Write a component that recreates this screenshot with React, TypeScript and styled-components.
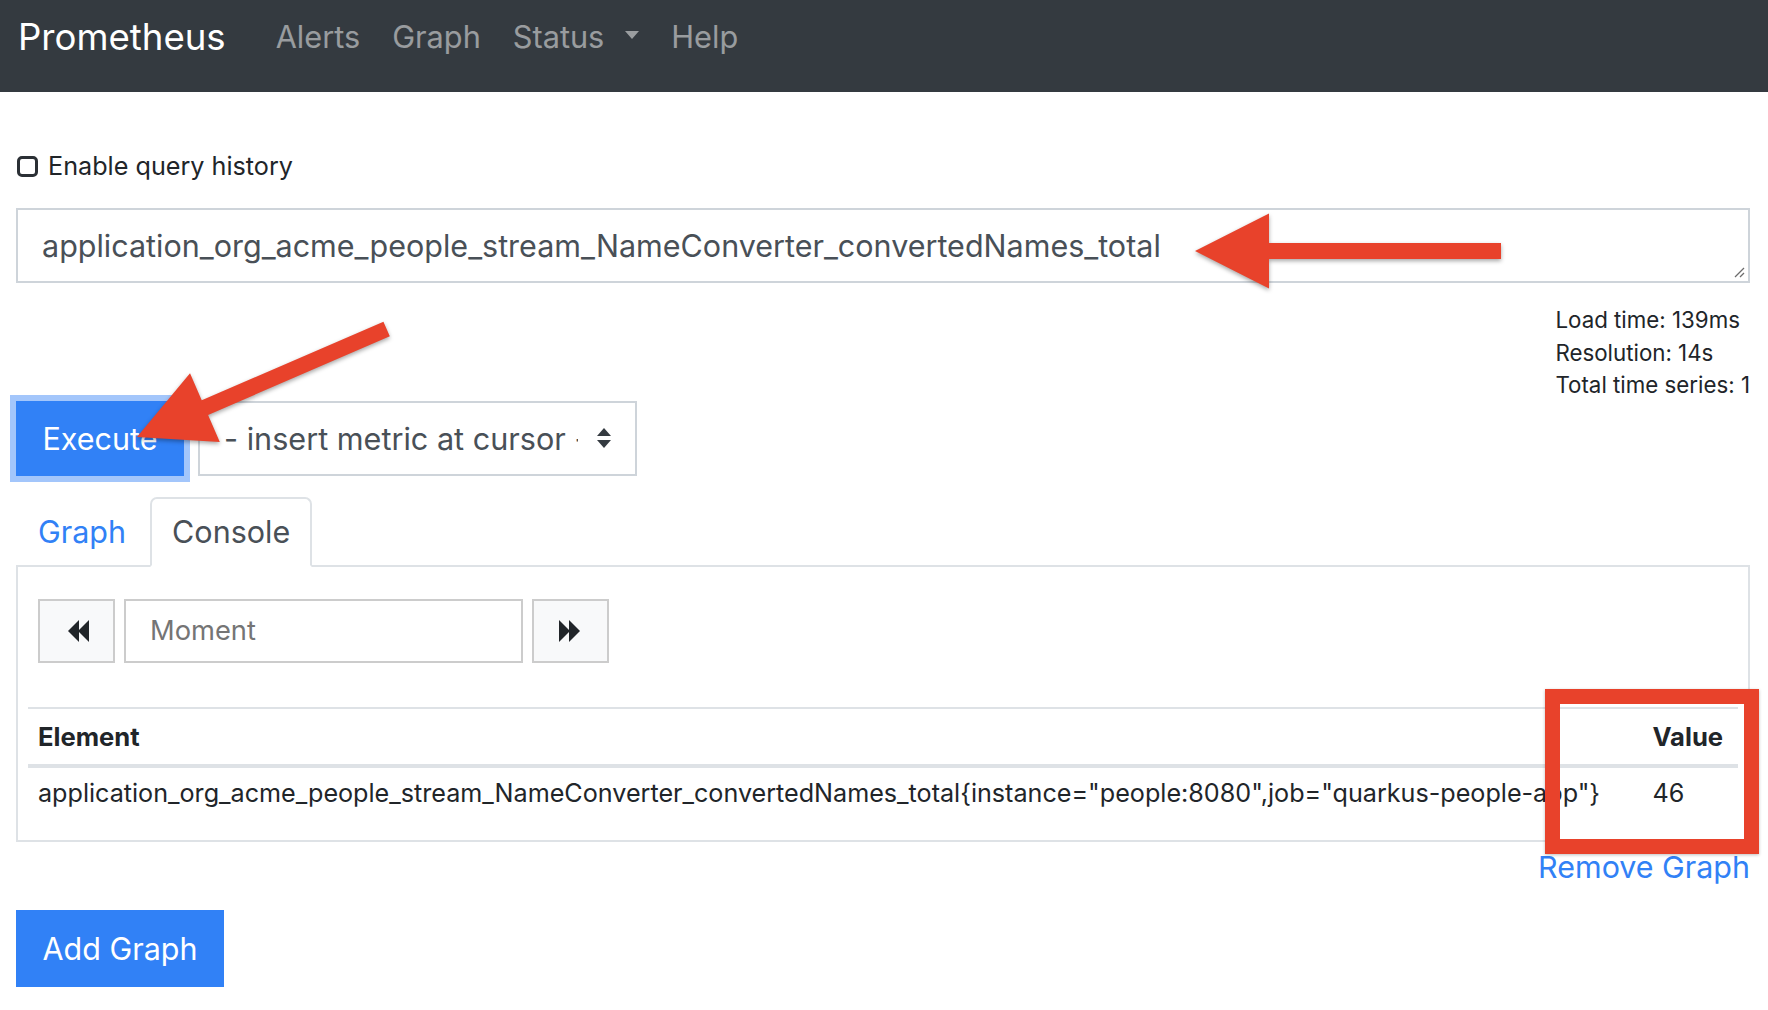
import React from 'react';
import styled, { createGlobalStyle } from 'styled-components';

const GlobalStyle = createGlobalStyle`
  html, body { margin: 0; padding: 0; background: #ffffff; }
  body { font-family: Inter, "Liberation Sans", Arial, sans-serif; color: #212529; }
  * { box-sizing: border-box; }
`;

const BLUE = '#3181f6';
const RED = '#e8422b';

const Page = styled.div`
  position: relative;
  width: 1768px;
  height: 1010px;
  overflow: hidden;
  background: #fff;
`;

const Navbar = styled.nav`
  height: 92px;
  background: #343a40;
  display: flex;
  align-items: center;
  padding: 0 0 18px 18px;
`;

const Brand = styled.span`
  font-size: 36.6px;
  color: #fff;
  margin-right: 34px;
  line-height: 1;
`;

const NavList = styled.ul`
  display: flex;
  list-style: none;
  margin: 0;
  padding: 0;
`;

const NavItem = styled.li`
  padding: 0 16px;
  font-size: 30.7px;
  line-height: 1;
  color: rgba(255, 255, 255, 0.5);
  display: flex;
  align-items: center;
  gap: 21px;
`;

const Caret = styled.span`
  width: 0;
  height: 0;
  border-left: 7px solid transparent;
  border-right: 7px solid transparent;
  border-top: 8px solid rgba(255, 255, 255, 0.5);
  margin-top: -4px;
`;

const Container = styled.main`
  display: flex;
  flex-direction: column;
  padding: 0 18px 0 16px;
`;

const CheckRow = styled.label`
  display: flex;
  align-items: center;
  gap: 10px;
  height: 36px;
  margin-top: 56px;
  margin-left: 1px;
  font-size: 25.2px;
  color: #212529;
`;

const CheckBox = styled.span`
  width: 21px;
  height: 21px;
  border: 3px solid #2b3035;
  border-radius: 5px;
  display: inline-block;
`;

const QueryBox = styled.div`
  position: relative;
  margin-top: 24px;
  height: 75px;
  border: 2px solid #ced4da;
  padding: 0 24px;
  display: flex;
  align-items: center;
  font-size: 30.5px;
  color: #495057;
`;

const Grip = styled.svg`
  position: absolute;
  right: 3px;
  bottom: 3px;
`;

const Stats = styled.div`
  align-self: flex-end;
  margin-top: 21px;
  font-size: 22.3px;
  line-height: 32.5px;
  color: #212529;
`;

const ExecRow = styled.div`
  display: flex;
  align-items: center;
  margin-top: -1px;
`;

const PrimaryButton = styled.button<{ $focused?: boolean; $w: number; $h: number }>`
  width: ${(p) => p.$w}px;
  height: ${(p) => p.$h}px;
  background: ${BLUE};
  color: #fff;
  border: 0;
  border-radius: 0;
  font-family: inherit;
  font-size: 30.5px;
  padding: 0;
  box-shadow: ${(p) => (p.$focused ? '0 0 0 6px #a3c6fb' : 'none')};
`;

const SelectBox = styled.div`
  position: relative;
  margin-left: 14px;
  width: 439px;
  height: 75px;
  border: 2px solid #ced4da;
  display: flex;
  align-items: center;
  padding-left: 24px;
  font-size: 30.6px;
  color: #495057;
`;

const SelectText = styled.span`
  width: 354px;
  overflow: hidden;
  white-space: nowrap;
`;

const UpDown = styled.svg`
  position: absolute;
  right: 23px;
  top: 50%;
  transform: translateY(-50%);
`;

const TabBar = styled.div`
  display: flex;
  gap: 2px;
  margin-top: 21px;
  border-bottom: 2px solid #dee2e6;
`;

const Tab = styled.div<{ $active?: boolean }>`
  height: 70px;
  padding: 0 20px;
  display: flex;
  align-items: center;
  font-size: 30.5px;
  margin-bottom: -2px;
  border: 2px solid ${(p) => (p.$active ? '#dee2e6' : 'transparent')};
  border-bottom-color: ${(p) => (p.$active ? '#fff' : 'transparent')};
  border-top-left-radius: 7px;
  border-top-right-radius: 7px;
  color: ${(p) => (p.$active ? '#495057' : BLUE)};
  background: ${(p) => (p.$active ? '#fff' : 'transparent')};
`;

const Panel = styled.section`
  border: 2px solid #dee2e6;
  border-top: 0;
  padding: 32px 10px 21px;
`;

const TimeControls = styled.div`
  display: flex;
  gap: 9px;
  margin-left: 10px;
  height: 64px;
`;

const StepButton = styled.div<{ $shift: number }>`
  width: 77px;
  height: 64px;
  background: #f8f9fa;
  border: 2px solid #cccccc;
  display: flex;
  align-items: center;
  justify-content: center;
  padding-left: ${(p) => (p.$shift > 0 ? p.$shift : 0)}px;
  padding-right: ${(p) => (p.$shift < 0 ? -p.$shift : 0)}px;
`;

const MomentInput = styled.div`
  width: 399px;
  height: 64px;
  border: 2px solid #cccccc;
  padding-left: 24px;
  display: flex;
  align-items: center;
  font-size: 27.3px;
  color: #757575;
`;

const Table = styled.table`
  width: 100%;
  margin-top: 44px;
  border-collapse: separate;
  border-spacing: 0;
  font-size: 25.15px;
  color: #212529;
`;

const Th = styled.th<{ $right?: boolean }>`
  text-align: left;
  font-weight: 700;
  font-size: 25.6px;
  line-height: 33px;
  padding: 11px ${(p) => (p.$right ? '13px' : '10px')} 11px 10px;
  border-top: 2px solid #dee2e6;
  border-bottom: 4px solid #dee2e6;
  white-space: nowrap;
`;

const Td = styled.td<{ $right?: boolean }>`
  line-height: 33px;
  padding: 9px ${(p) => (p.$right ? '13px' : '10px')} 9px 10px;
  white-space: nowrap;
`;

const RemoveRow = styled.div`
  display: flex;
  justify-content: flex-end;
  margin-top: 7px;
  font-size: 30.45px;
  line-height: 36px;
  color: ${BLUE};
`;

const AddRow = styled.div`
  margin-top: 25px;
`;

const Overlay = styled.svg`
  position: absolute;
  left: 0;
  top: 0;
  pointer-events: none;
  filter: drop-shadow(0 2px 2px rgba(0, 0, 0, 0.35));
`;

const RedBox = styled.div`
  position: absolute;
  left: 1545px;
  top: 689px;
  width: 214px;
  height: 165px;
  border: 15px solid ${RED};
  box-shadow: 0 1px 3px rgba(0, 0, 0, 0.25);
  pointer-events: none;
`;

const QUERY = 'application_org_acme_people_stream_NameConverter_convertedNames_total';
const ROW = QUERY + '{instance="people:8080",job="quarkus-people-app"}';

function Rewind({ flip }: { flip?: boolean }) {
  return (
    <svg width="22" height="22" viewBox="0 0 22 22" style={flip ? { transform: 'scaleX(-1)' } : undefined}>
      <polygon points="0,11 11,0 11,22" fill="#212529" />
      <polygon points="10,11 21,0 21,22" fill="#212529" />
    </svg>
  );
}

function Arrow({ x, y, angle, length }: { x: number; y: number; angle: number; length: number }) {
  const L = length;
  const pts = `0,0 74,-37.5 74,-8 ${L},-8 ${L},8 74,8 74,37.5`;
  return <polygon points={pts} fill={RED} transform={`translate(${x} ${y}) rotate(${angle})`} />;
}

export default function App() {
  return (
    <Page>
      <GlobalStyle />
      <Navbar>
        <Brand>Prometheus</Brand>
        <NavList>
          <NavItem>Alerts</NavItem>
          <NavItem>Graph</NavItem>
          <NavItem>
            Status
            <Caret />
          </NavItem>
          <NavItem>Help</NavItem>
        </NavList>
      </Navbar>

      <Container>
        <CheckRow>
          <CheckBox />
          Enable query history
        </CheckRow>

        <QueryBox>
          {QUERY}
          <Grip width="12" height="12" viewBox="0 0 12 12">
            <line x1="11" y1="2" x2="2" y2="11" stroke="#6c6c6c" strokeWidth="1.3" />
            <line x1="11" y1="7" x2="7" y2="11" stroke="#6c6c6c" strokeWidth="1.3" />
          </Grip>
        </QueryBox>

        <Stats>
          <div>Load time: 139ms</div>
          <div>Resolution: 14s</div>
          <div>Total time series: 1</div>
        </Stats>

        <ExecRow>
          <PrimaryButton $focused $w={168} $h={75}>
            Execute
          </PrimaryButton>
          <SelectBox>
            <SelectText>- insert metric at cursor -</SelectText>
            <UpDown width="16" height="26" viewBox="0 0 16 26">
              <polygon points="1,11 8,3 15,11" fill="#343a40" />
              <polygon points="1,15 15,15 8,23" fill="#343a40" />
            </UpDown>
          </SelectBox>
        </ExecRow>

        <TabBar>
          <Tab>Graph</Tab>
          <Tab $active>Console</Tab>
        </TabBar>

        <Panel>
          <TimeControls>
            <StepButton $shift={5}>
              <Rewind />
            </StepButton>
            <MomentInput>Moment</MomentInput>
            <StepButton $shift={-3}>
              <Rewind flip />
            </StepButton>
          </TimeControls>

          <Table>
            <thead>
              <tr>
                <Th>Element</Th>
                <Th $right>Value</Th>
              </tr>
            </thead>
            <tbody>
              <tr>
                <Td>{ROW}</Td>
                <Td $right>46</Td>
              </tr>
            </tbody>
          </Table>
        </Panel>

        <RemoveRow>Remove Graph</RemoveRow>

        <AddRow>
          <PrimaryButton $w={208} $h={77}>
            Add Graph
          </PrimaryButton>
        </AddRow>
      </Container>

      <RedBox />
      <Overlay width="1768" height="1010" viewBox="0 0 1768 1010">
        <Arrow x={1195} y={251} angle={0} length={306} />
        <Arrow x={137} y={437} angle={-23.4} length={272} />
      </Overlay>
    </Page>
  );
}
